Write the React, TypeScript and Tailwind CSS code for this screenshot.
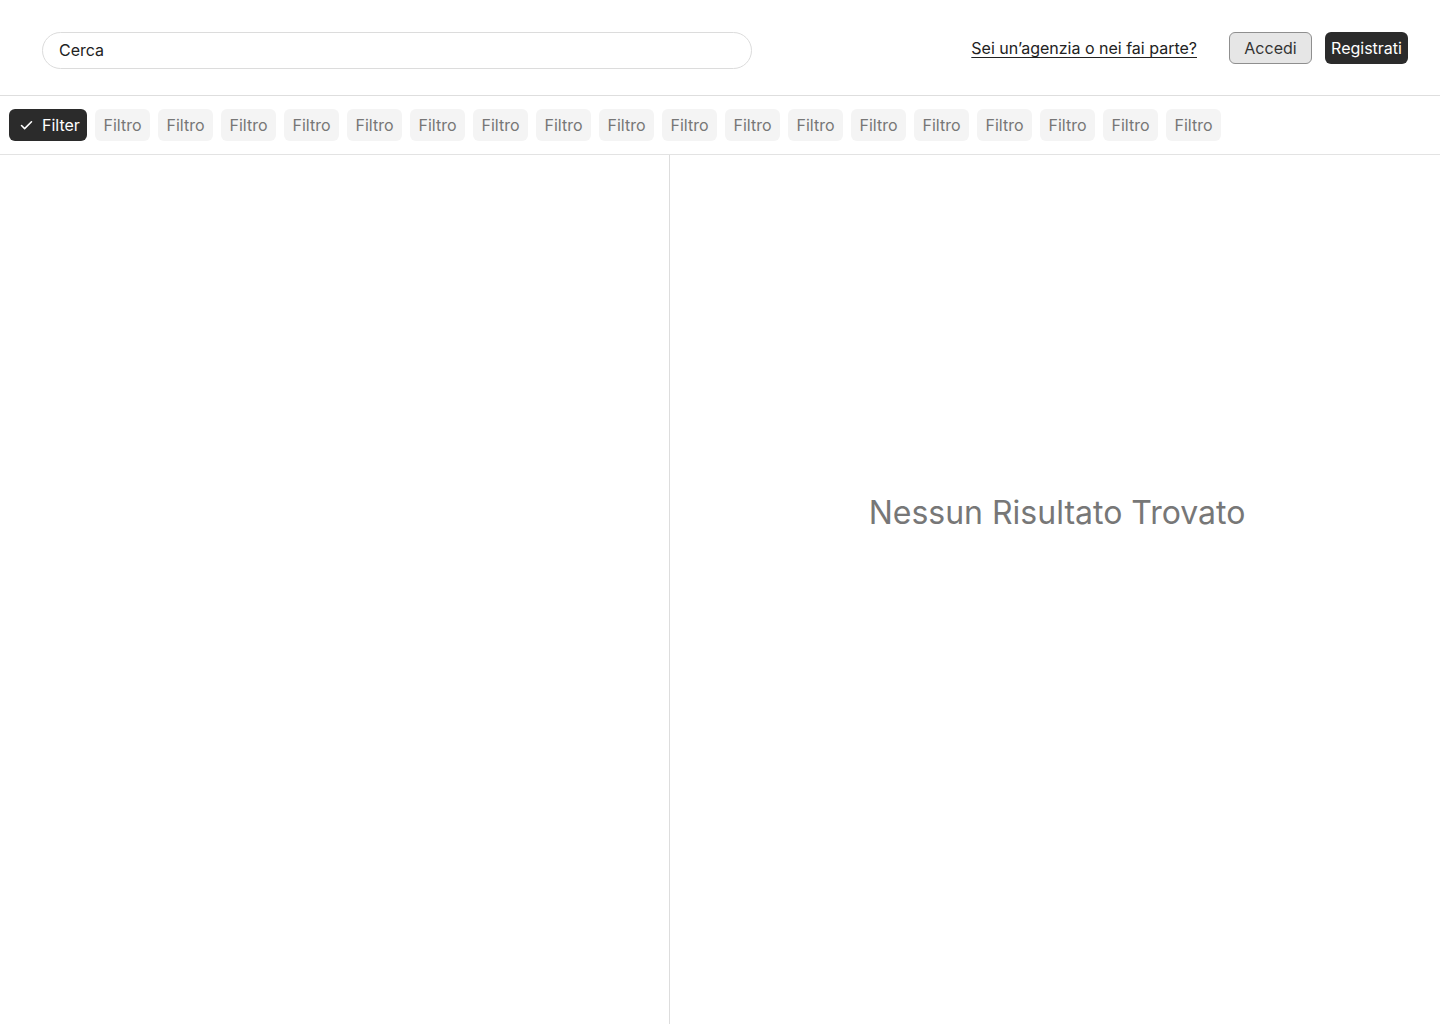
import { Check } from 'lucide-react';

const chips = Array.from({ length: 18 }, (_, i) => i);

export default function App() {
  return (
    <div className="min-h-screen bg-white font-['Inter',_'Liberation_Sans',_sans-serif] text-[#222] flex flex-col">
      <header className="h-[96px] border-b border-[#dedede] flex items-center pl-[42px] pr-[32px]">
        <div className="w-[710px] h-[37px] rounded-full border border-[#dcdcdc] flex items-center px-4 mt-[5px]">
          <span className="text-[16px] text-[#222]">Cerca</span>
        </div>
        <div className="ml-auto flex items-center mt-[1px] gap-[13px]">
          <a className="text-[16px] underline underline-offset-[3px] text-[#222] mr-[19px]">
            Sei un’agenzia o nei fai parte?
          </a>
          <button className="h-[32px] w-[83px] rounded-md border border-[#8f8f8f] bg-[#e6e6e6] text-[16px] text-[#333]">
            Accedi
          </button>
          <button className="h-[32px] w-[83px] rounded-md bg-[#2b2b2b] text-[16px] text-white">
            Registrati
          </button>
        </div>
      </header>
      <div className="h-[59px] border-b border-[#e3e3e3] flex items-center gap-[8px] px-[9px]">
        <button className="h-[32px] w-[78px] rounded-md bg-[#2b2b2b] text-white text-[16px] flex items-center gap-[8px] pl-[10px]">
          <Check size={15} strokeWidth={2.5} />
          Filter
        </button>
        {chips.map((i) => (
          <span
            key={i}
            className="h-[32px] w-[55px] rounded-md bg-[#f4f4f4] text-[#777] text-[16px] flex items-center justify-center"
          >
            Filtro
          </span>
        ))}
      </div>
      <main className="flex flex-1">
        <section className="w-[670px] border-r border-[#dddddd]" />
        <section className="flex-1 flex justify-center pt-[334px] pl-[4px]">
          <p className="text-[32px] text-[#777] h-fit">Nessun Risultato Trovato</p>
        </section>
      </main>
    </div>
  );
}
